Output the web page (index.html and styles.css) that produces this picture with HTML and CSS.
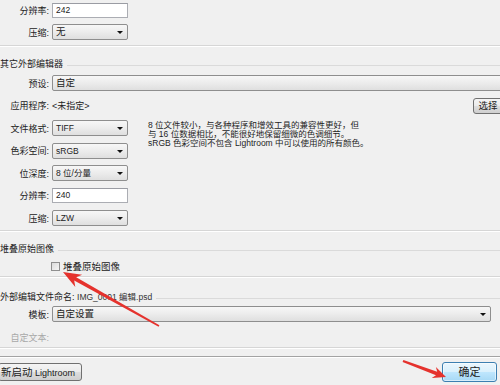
FILE: index.html
```html
<!DOCTYPE html>
<html lang="zh-CN">
<head>
<meta charset="utf-8">
<title>外部编辑</title>
<link rel="stylesheet" href="styles.css">
</head>
<body>
<div class="page">
  <section class="group g1">
    <div class="row r15"><span class="lbl">分辨率:</span><div class="field w76">242</div></div>
    <div class="row"><span class="lbl">压缩:</span><div class="combo w76"><span class="cjk">无</span></div></div>
  </section>

  <section class="group g2">
    <div class="ghead"><span>其它外部编辑器</span></div>
    <div class="rows">
      <div class="row"><span class="lbl">预设:</span><div class="combo wide noarrow"><span class="cjk">自定</span></div></div>
      <div class="row"><span class="lbl">应用程序:</span><span class="val">&lt;未指定&gt;</span><div class="btn pick">选择</div></div>
      <div class="split">
        <div class="col">
          <div class="row"><span class="lbl">文件格式:</span><div class="combo w76">TIFF</div></div>
          <div class="row"><span class="lbl">色彩空间:</span><div class="combo w76">sRGB</div></div>
          <div class="row"><span class="lbl">位深度:</span><div class="combo w76">8 位/分量</div></div>
          <div class="row"><span class="lbl">分辨率:</span><div class="field w76">240</div></div>
          <div class="row"><span class="lbl">压缩:</span><div class="combo w76">LZW</div></div>
        </div>
        <div class="desc">
          <p>8 位文件较小，与各种程序和增效工具的兼容性更好，但</p>
          <p>与 16 位数据相比，不能很好地保留细微的色调细节。</p>
          <p>sRGB 色彩空间不包含 Lightroom 中可以使用的所有颜色。</p>
        </div>
      </div>
    </div>
  </section>

  <section class="group g3">
    <div class="ghead"><span>堆叠原始图像</span></div>
    <div class="check-row"><span class="box"></span><span class="check-label">堆叠原始图像</span></div>
  </section>

  <section class="group g4">
    <div class="ghead"><span>外部编辑文件命名: <span class="fname">IMG_0001 编辑.psd</span></span></div>
    <div class="row tpl-row"><span class="lbl">模板:</span><div class="combo tpl"><span class="cjk">自定设置</span></div></div>
    <div class="row custom-row"><span class="lbl dim">自定文本:</span></div>
  </section>

  <div class="divider"></div>

  <div class="actions">
    <div class="btn restart"><span class="cjk-big">新启动</span> Lightroom</div>
    <div class="btn ok">确定</div>
  </div>
</div>

<svg class="marks" width="500" height="385" viewBox="0 0 500 385" aria-hidden="true">
  <polygon points="63,272 82.1,274.7 76.2,277.2 159.4,325.3 158.6,326.7 74.2,280.6 75.3,286.9" />
  <polygon points="446,377 435.9,366.9 437.2,371.8 403.4,359.9 402.6,362.1 436,375.2 431.7,378.1" />
</svg>
</body>
</html>
```

FILE: styles.css
```css
html, body {
  margin: 0;
  padding: 0;
}

body {
  width: 500px;
  height: 385px;
  overflow: hidden;
  position: relative;
  background: #f0f0f0;
  font-family: "Liberation Sans", "Noto Sans CJK SC", sans-serif;
  font-size: 9px;
  color: #222;
}

.page {
  display: flex;
  flex-direction: column;
  width: 500px;
  padding-top: 3px;
}

.group {
  display: flex;
  flex-direction: column;
  border-bottom: 1px solid #d6d6d6;
  box-shadow: 0 1px 0 #ffffff;
}

.g1 {
  gap: 6px;
  padding-bottom: 5px;
}

.g2 {
  padding-bottom: 4px;
}

.g3 {
  padding-bottom: 4px;
}

.g4 {
  padding-bottom: 2px;
}

.ghead {
  display: flex;
  align-items: center;
  height: 12px;
  line-height: 12px;
  margin-top: 12px;
  white-space: nowrap;
}

.ghead::after {
  content: "";
  flex: 1;
  height: 1px;
  margin-left: 4px;
  margin-top: 2px;
  background: #dadada;
}

.g4 .ghead {
  margin-top: 14px;
}

.fname {
  font-size: 8.5px;
  color: #333;
}

.rows {
  display: flex;
  flex-direction: column;
  gap: 6.5px;
  margin-top: 5px;
}

.row {
  display: flex;
  align-items: center;
  height: 16px;
  white-space: nowrap;
}

.r15 {
  height: 15px;
}

.lbl {
  flex: none;
  width: 49px;
  text-align: right;
}

.dim {
  color: #a8a8a8;
}

.val {
  margin-left: 3px;
}

.field {
  box-sizing: border-box;
  margin-left: 3px;
  height: 15px;
  line-height: 13px;
  padding-left: 3px;
  border: 1px solid #abadb3;
  border-top-color: #9a9ca3;
  background: #ffffff;
  font-size: 8.5px;
}

.w76 {
  width: 76px;
}

.combo {
  position: relative;
  box-sizing: border-box;
  margin-left: 3px;
  height: 16px;
  line-height: 14px;
  padding-left: 3px;
  border: 1px solid #8e8e8e;
  border-radius: 2px;
  background: linear-gradient(#f7f7f7, #ececec 50%, #dfdfdf);
  font-size: 8.5px;
}

.combo::after {
  content: "";
  position: absolute;
  right: 4px;
  top: 6px;
  border-left: 3px solid transparent;
  border-right: 3px solid transparent;
  border-top: 3px solid #111;
}

.noarrow::after {
  display: none;
}

.cjk {
  font-size: 9.5px;
}

.wide {
  flex: 1;
  margin-right: -6px;
}

.tpl {
  flex: 1;
  margin-right: 9px;
}

.btn {
  box-sizing: border-box;
  border: 1px solid #707070;
  border-radius: 3px;
  background: linear-gradient(#f4f4f4, #ebebeb 48%, #dddddd 52%, #cfcfcf);
  white-space: nowrap;
}

.pick {
  margin-left: auto;
  margin-right: -3px;
  width: 30px;
  height: 16px;
  line-height: 14px;
  text-align: center;
  font-size: 9.5px;
}

.split {
  display: flex;
  align-items: flex-start;
}

.col {
  display: flex;
  flex-direction: column;
  gap: 6.5px;
  width: 128px;
}

.desc {
  margin-left: 20px;
  margin-top: 1px;
  font-size: 8.5px;
  line-height: 9px;
  white-space: nowrap;
  color: #1e1e1e;
}

.desc p {
  margin: 0;
}

.check-row {
  display: flex;
  align-items: center;
  height: 12px;
  margin-top: 5px;
  padding-left: 51px;
}

.box {
  box-sizing: border-box;
  width: 9px;
  height: 9px;
  border: 1px solid #8f8f8f;
  background: linear-gradient(135deg, #dcdcdc, #f6f6f6);
}

.check-label {
  margin-left: 3px;
  font-size: 9.5px;
}

.tpl-row {
  margin-top: 3px;
}

.custom-row {
  margin-top: 7px;
}

.divider {
  height: 1px;
  margin-top: 8px;
  background: #a3a3a3;
  box-shadow: 0 1px 0 #ffffff;
}

.actions {
  display: flex;
  justify-content: space-between;
  align-items: center;
  height: 20px;
  margin-top: 5px;
}

.restart {
  margin-left: -2px;
  width: 84px;
  height: 18px;
  line-height: 16px;
  padding-left: 2px;
  font-size: 9px;
}

.cjk-big {
  font-size: 10.5px;
}

.ok {
  margin-right: 3px;
  width: 55px;
  height: 20px;
  line-height: 18px;
  text-align: center;
  font-size: 11px;
  border-color: #3c7fb1;
  background: linear-gradient(#eaf6fd, #d9f0fc 50%, #bee6fd 52%, #a7d9f5);
  box-shadow: inset 0 0 0 1px rgba(255, 255, 255, 0.55);
}

.marks {
  position: absolute;
  left: 0;
  top: 0;
  pointer-events: none;
  fill: #e5322d;
}
```
